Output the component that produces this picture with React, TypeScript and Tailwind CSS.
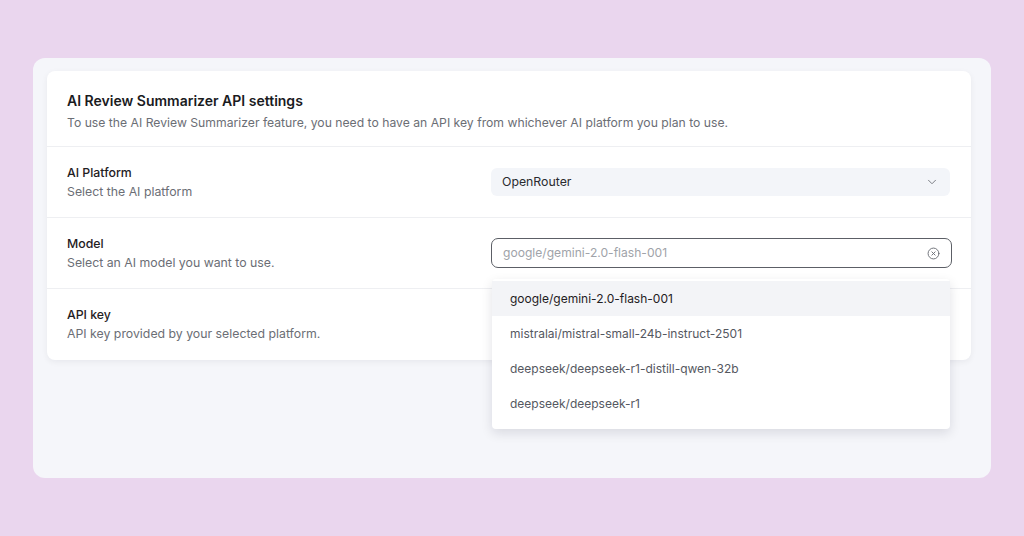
import { ChevronDown, CircleX } from "lucide-react";

const models = [
    "google/gemini-2.0-flash-001",
    "mistralai/mistral-small-24b-instruct-2501",
    "deepseek/deepseek-r1-distill-qwen-32b",
    "deepseek/deepseek-r1",
];

function Row({ title, desc, children, last }: { title: string; desc: string; children?: React.ReactNode; last?: boolean }) {
    return (
        <div className={`flex items-center h-[71px] pl-5 pr-5 ${last ? "" : "border-b border-[#eeeff2]"}`}>
            <div className="w-[424px] shrink-0">
                <p className="text-[12.3px] font-medium text-[#1f2023] leading-[18px]">{title}</p>
                <p className="text-[12.3px] text-[#6b6e75] leading-[18px] mt-[1px]">{desc}</p>
            </div>
            <div className="flex-1">{children}</div>
        </div>
    );
}

export default function App() {
    return (
        <div
            className="w-[1024px] h-[536px] bg-[#ead6ee] pt-[58px] pl-[33px]"
            style={{ fontFamily: "Inter, 'Noto Sans', sans-serif" }}
        >
            <div className="w-[958px] h-[420px] bg-[#f5f6fa] rounded-[12px] pt-[13px] pl-[14px]">
                <div className="relative w-[924px] bg-white rounded-[8px] shadow-[0_2px_6px_rgba(20,20,40,0.06)]">
                    {/* Header */}
                    <div className="pl-5 pt-[20px] pb-[14px] border-b border-[#eeeff2]">
                        <h1 className="text-[14px] font-semibold text-[#1a1b1e] leading-[20px]">
                            AI Review Summarizer API settings
                        </h1>
                        <p className="text-[12.2px] text-[#6b6e75] leading-[18px] mt-[3px]">
                            To use the AI Review Summarizer feature, you need to have an API key from whichever AI platform you plan to use.
                        </p>
                    </div>

                    <Row title="AI Platform" desc="Select the AI platform">
                        <div className="flex items-center justify-between h-[28px] w-[459px] bg-[#f3f5f9] rounded-[6px] pl-[11px] pr-[11px]">
                            <span className="text-[12.3px] text-[#2a2b2f]">OpenRouter</span>
                            <ChevronDown className="w-[14px] h-[14px] text-[#6b6e75]" strokeWidth={1.5} />
                        </div>
                    </Row>

                    <Row title="Model" desc="Select an AI model you want to use.">
                        <div className="flex items-center justify-between h-[30px] w-[461px] border border-[#5c5f66] rounded-[7px] pl-[11px] pr-[11px] bg-white">
                            <span className="text-[12.1px] text-[#a0a3a9]">google/gemini-2.0-flash-001</span>
                            <CircleX className="w-[13px] h-[13px] text-[#6b6e75]" strokeWidth={1.75} />
                        </div>
                    </Row>

                    <Row title="API key" desc="API key provided by your selected platform." last />

                    {/* Dropdown menu */}
                    <div className="absolute left-[445px] top-[208px] w-[458px] bg-white rounded-[4px] shadow-[0_4px_12px_rgba(20,20,40,0.12)] pt-[2px] pb-[8px]">
                        {models.map((m, i) => (
                            <div
                                key={m}
                                className={`h-[35px] flex items-center pl-[18px] text-[12px] ${
                                    i === 0 ? "bg-[#f3f4f7] text-[#1f2023]" : "text-[#55585f]"
                                }`}
                            >
                                {m}
                            </div>
                        ))}
                    </div>
                </div>
            </div>
        </div>
    );
}
